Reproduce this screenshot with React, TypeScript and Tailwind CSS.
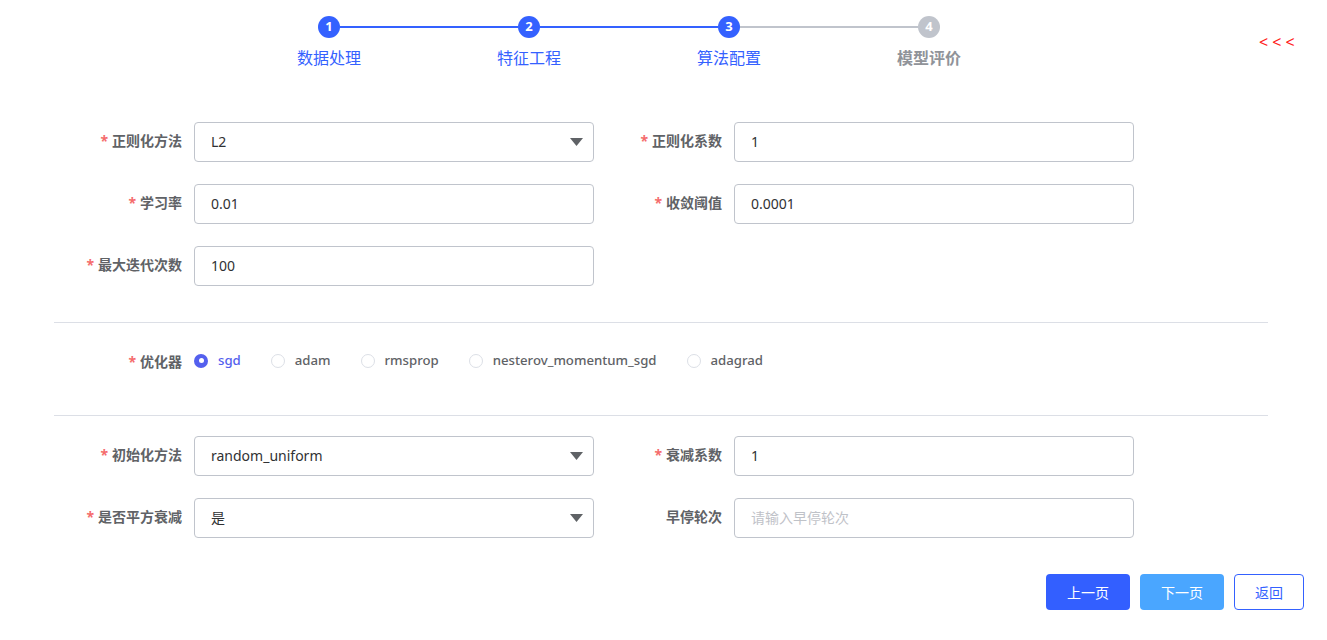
import React from "react";

const FONT = { fontFamily: '"Noto Sans", "Noto Sans CJK SC", sans-serif' };

function Caret() {
  return (
    <svg width="13" height="8" viewBox="0 0 13 8" className="shrink-0">
      <path d="M0 0 H13 L6.5 8 Z" fill="#5f6266" />
    </svg>
  );
}

function Label({ text, required = true }: { text: string; required?: boolean }) {
  return (
    <div className="w-[140px] shrink-0 pr-[12px] text-right text-[14px] font-bold text-[#606266] leading-[37px]">
      {required && <span className="text-[#f56c6c] mr-[4px]">*</span>}
      {text}
    </div>
  );
}

function Field({
  label,
  value,
  select,
  placeholder,
  required = true,
}: {
  label: string;
  value?: string;
  select?: boolean;
  placeholder?: string;
  required?: boolean;
}) {
  return (
    <div className="flex items-start w-[540px]">
      <Label text={label} required={required} />
      <div className="w-[400px] h-[40px] border border-[#c0c4cc] rounded-[4px] flex items-center pl-[16px] pr-[10px] bg-white">
        <span
          className={
            "flex-1 text-[14px] leading-[20px] -mt-[1px] " +
            (value ? "text-[#303133]" : "text-[#bfc2c8]")
          }
        >
          {value ?? placeholder}
        </span>
        {select && <Caret />}
      </div>
    </div>
  );
}

function Radio({ label, checked }: { label: string; checked?: boolean }) {
  return (
    <div className="flex items-center mr-[30px]">
      {checked ? (
        <span className="w-[14px] h-[14px] rounded-full bg-[#5460ee] flex items-center justify-center">
          <span className="w-[5px] h-[5px] rounded-full bg-white" />
        </span>
      ) : (
        <span className="w-[14px] h-[14px] rounded-full border border-[#dcdfe6] bg-white" />
      )}
      <span
        className={
          "ml-[10px] text-[13.2px] font-medium " +
          (checked ? "text-[#5460ee]" : "text-[#606266]")
        }
      >
        {label}
      </span>
    </div>
  );
}

function StepCircle({ n, active }: { n: number; active: boolean }) {
  return (
    <div
      className={
        "w-[22px] h-[22px] rounded-full shrink-0 flex items-center justify-center text-white text-[13px] font-bold " +
        (active ? "bg-[#3461ff]" : "bg-[#c0c4cc]")
      }
    >
      {n}
    </div>
  );
}

export default function App() {
  return (
    <div className="w-[1327px] h-[640px] bg-white relative overflow-hidden" style={FONT}>
      {/* header steps */}
      <div className="flex items-start pt-[16px]">
        <div className="w-[800px] ml-[229px]">
          <div className="flex items-center px-[89px]">
            <StepCircle n={1} active />
            <div className="flex-1 h-[2px] bg-[#3461ff]" />
            <StepCircle n={2} active />
            <div className="flex-1 h-[2px] bg-[#3461ff]" />
            <StepCircle n={3} active />
            <div className="flex-1 h-[2px] bg-[#c0c4cc]" />
            <StepCircle n={4} active={false} />
          </div>
          <div className="grid grid-cols-4 mt-[8px] text-[16px] leading-[24px] text-center">
            <div className="text-[#3461ff]">数据处理</div>
            <div className="text-[#3461ff]">特征工程</div>
            <div className="text-[#3461ff]">算法配置</div>
            <div className="text-[#909399] font-bold">模型评价</div>
          </div>
        </div>
        <div className="ml-[230px] mt-[16px] text-[16px] leading-[20px] text-[#ff2020]">
          &lt; &lt; &lt;
        </div>
      </div>

      <div className="ml-[54px] w-[1214px]">
        {/* section 1 */}
        <div className="mt-[52px] grid grid-cols-[540px_540px] gap-y-[22px]">
          <Field label="正则化方法" value="L2" select />
          <Field label="正则化系数" value="1" />
          <Field label="学习率" value="0.01" />
          <Field label="收敛阈值" value="0.0001" />
          <Field label="最大迭代次数" value="100" />
        </div>

        <div className="mt-[36px] h-px bg-[#dcdfe6]" />

        {/* optimizer */}
        <div className="mt-[18px] flex items-center h-[40px]">
          <Label text="优化器" />
          <div className="flex items-center">
            <Radio label="sgd" checked />
            <Radio label="adam" />
            <Radio label="rmsprop" />
            <Radio label="nesterov_momentum_sgd" />
            <Radio label="adagrad" />
          </div>
        </div>

        <div className="mt-[34px] h-px bg-[#dcdfe6]" />

        {/* section 3 */}
        <div className="mt-[20px] grid grid-cols-[540px_540px] gap-y-[22px]">
          <Field label="初始化方法" value="random_uniform" select />
          <Field label="衰减系数" value="1" />
          <Field label="是否平方衰减" value="是" select />
          <Field label="早停轮次" placeholder="请输入早停轮次" required={false} />
        </div>
      </div>

      {/* buttons */}
      <div className="mt-[36px] flex justify-end pr-[23px] gap-[10px]">
        <button className="w-[84px] h-[36px] rounded-[4px] bg-[#335fff] text-white text-[14px]">
          上一页
        </button>
        <button className="w-[84px] h-[36px] rounded-[4px] bg-[#4aa6ff] text-white text-[14px]">
          下一页
        </button>
        <button className="w-[70px] h-[36px] rounded-[4px] border border-[#3461ff] bg-white text-[#3461ff] text-[14px]">
          返回
        </button>
      </div>
    </div>
  );
}
